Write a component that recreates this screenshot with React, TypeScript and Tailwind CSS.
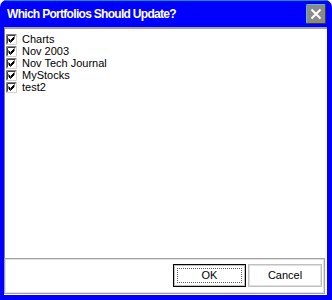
import React from 'react';

const items = ['Charts', 'Nov 2003', 'Nov Tech Journal', 'MyStocks', 'test2'];

// Classic sunken checkbox with a black tick
const CheckBox: React.FC = () => (
  <svg width="11" height="11" viewBox="0 0 11 11" className="shrink-0">
    <rect x="0" y="0" width="11" height="11" fill="#ffffff" />
    <path d="M0.5 10.5 V0.5 H10.5" stroke="#808080" fill="none" />
    <path d="M1.5 9.5 V1.5 H9.5" stroke="#404040" fill="none" />
    <path d="M0.5 10.5 H10.5 V0.5" stroke="#d4d0c8" fill="none" />
    <path d="M2.5 4.5 L4.5 6.5 L8.5 2.5 M2.5 5.5 L4.5 7.5 L8.5 3.5 M2.5 6.5 L4.5 8.5 L8.5 4.5" stroke="#000000" fill="none" />
  </svg>
);

const App: React.FC = () => {
  return (
    <div
      className="w-[332px] h-[300px] bg-[#0000ff] rounded-t-[7px] flex flex-col pl-[4px] pr-[5px] pb-[5px] overflow-hidden"
      style={{ fontFamily: '"Liberation Sans", Arial, sans-serif' }}
    >
      {/* title bar */}
      <div className="h-[27px] shrink-0 flex items-center justify-between border-t border-[#1a8fa8] -ml-[4px] -mr-[5px] pl-[7px] pr-[6px]">
        <span className="text-white font-bold text-[12px] tracking-[-0.7px] leading-none">Which Portfolios Should Update?</span>
        <button className="w-[20px] h-[20px] bg-[#8a8a8a] rounded-[2px] border border-t-[#5fb8c8] border-l-[#5fb8c8] border-r-[#3a3a3a] border-b-[#3a3a3a] flex items-center justify-center">
          <svg width="12" height="12" viewBox="0 0 12 12">
            <path d="M1.5 1.5 L10.5 10.5 M10.5 1.5 L1.5 10.5" stroke="#ffffff" strokeWidth="2" />
          </svg>
        </button>
      </div>

      {/* client area */}
      <div className="flex-1 bg-white flex flex-col">
        <div className="flex-1 border-t-2 border-l border-t-[#a0a0a0] border-l-[#808080] pt-[4px] pl-[1px] flex flex-col">
          {items.map((name) => (
            <label key={name} className="h-[12px] flex items-center gap-[5px] text-[11px] text-black leading-none">
              <CheckBox />
              <span>{name}</span>
            </label>
          ))}
        </div>

        {/* button strip */}
        <div className="h-[36px] shrink-0 border border-[#a0a0a0] mr-[2px] mb-[1px]">
          <div className="h-full border border-[#e0e0e0] flex items-center justify-end gap-[2px] pr-[1px] pb-[1px]">
            <button className="w-[73px] h-[23px] border border-black bg-white text-[11px] text-black">
              <div className="h-full border border-[#c0c0c0] p-[2px]">
                <div className="h-full border border-dotted border-[#606060] flex items-center justify-center">OK</div>
              </div>
            </button>
            <button className="w-[74px] h-[23px] border border-[#c0c0c0] bg-white text-[11px] text-black">
              <div className="h-full border border-[#e0e0e0] flex items-center justify-center">Cancel</div>
            </button>
          </div>
        </div>
      </div>
    </div>
  );
};

export default App;
